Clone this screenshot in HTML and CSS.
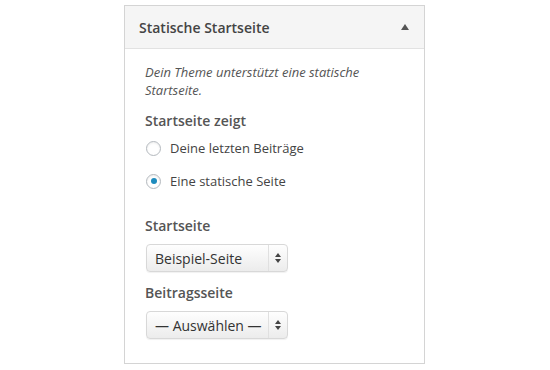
FILE: index.html
```html
<!DOCTYPE html>
<html lang="de">
<head>
<meta charset="utf-8">
<link rel="stylesheet" href="styles.css">
</head>
<body>
<div class="panel">
  <div class="panel-head">
    <h3 class="panel-title">Statische Startseite</h3>
    <span class="toggle"></span>
  </div>
  <div class="panel-body">
    <p class="desc">Dein Theme unterstützt eine statische Startseite.</p>
    <div class="label">Startseite zeigt</div>
    <div class="radio-row"><span class="radio"></span><span class="radio-text">Deine letzten Beiträge</span></div>
    <div class="radio-row"><span class="radio checked"></span><span class="radio-text">Eine statische Seite</span></div>
    <div class="label label-gap">Startseite</div>
    <div class="select"><span class="select-text">Beispiel-Seite</span><span class="select-arrows"></span></div>
    <div class="label label-small-gap">Beitragsseite</div>
    <div class="select"><span class="select-text">— Auswählen —</span><span class="select-arrows"></span></div>
  </div>
</div>
</body>
</html>
```
FILE: styles.css
```css
html, body { margin: 0; padding: 0; background: #fff; }
body { font-family: "Open Sans", "Noto Sans", sans-serif; color: #555; }
.panel {
  box-sizing: border-box;
  width: 301px;
  margin: 5px 0 0 124px;
  border: 1px solid #d4d4d4;
  background: #fff;
}
.panel-head {
  height: 42px;
  background: #f5f5f5;
  border-bottom: 1px solid #e2e2e2;
  display: flex;
  align-items: center;
  justify-content: space-between;
  padding: 0 15px 0 14px;
}
.panel-title {
  margin: 0;
  font-size: 14px;
  font-weight: 600;
  color: #444;
}
.toggle {
  width: 0; height: 0;
  border-left: 4px solid transparent;
  border-right: 4px solid transparent;
  border-bottom: 6px solid #555;
  margin-top: -1px;
}
.panel-body { padding: 14px 20px 24px 20px; }
.desc {
  margin: 0;
  font-size: 13px;
  font-style: italic;
  line-height: 18px;
  width: 230px;
}
.label {
  font-size: 14px;
  font-weight: 600;
  line-height: 20px;
  margin-top: 12px;
  color: #555;
}
.label-gap { margin-top: 25px; }
.label-small-gap { margin-top: 11px; }
.radio-row {
  display: flex;
  align-items: center;
  height: 20px;
  margin-top: 7px;
  padding-left: 1px;
}
.radio-row + .radio-row { margin-top: 13px; }
.radio {
  box-sizing: border-box;
  width: 15px; height: 15px;
  border-radius: 50%;
  border: 1px solid #b4b9be;
  background: #fff;
  box-shadow: inset 0 1px 2px rgba(0,0,0,0.08);
  display: flex;
  align-items: center;
  justify-content: center;
}
.radio.checked::after {
  content: "";
  width: 6px; height: 6px;
  border-radius: 50%;
  background: #1e8cbe;
}
.radio-text { margin-left: 9px; font-size: 13px; color: #444; }
.select {
  box-sizing: border-box;
  margin-top: 8px;
  margin-left: 1px;
  width: 142px;
  height: 28px;
  border: 1px solid #d8d8d8;
  border-radius: 4px;
  background: linear-gradient(#fefefe, #ececec);
  box-shadow: 0 1px 1px rgba(0,0,0,0.06);
  display: flex;
  align-items: center;
  position: relative;
}
.select-text {
  flex: 1;
  padding-left: 8px;
  font-size: 14px;
  color: #333;
}
.select-arrows {
  width: 18px;
  height: 26px;
  border-left: 1px solid #e0e0e0;
  position: relative;
}
.select-arrows::before, .select-arrows::after {
  content: "";
  position: absolute;
  left: 6px;
  width: 0; height: 0;
  border-left: 3px solid transparent;
  border-right: 3px solid transparent;
}
.select-arrows::before { top: 8px; border-bottom: 4px solid #444; }
.select-arrows::after { top: 14px; border-top: 4px solid #444; }
```
